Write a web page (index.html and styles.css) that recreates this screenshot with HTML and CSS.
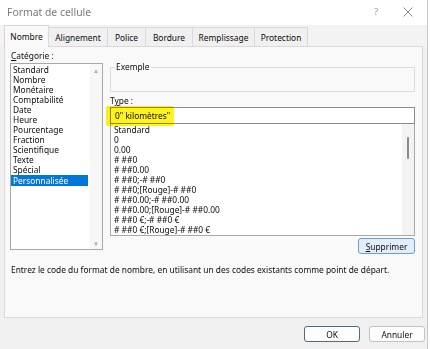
FILE: index.html
```html
<!DOCTYPE html>
<html lang="fr">
<head>
<meta charset="utf-8">
<title>Format de cellule</title>
<link rel="stylesheet" href="styles.css">
</head>
<body>
<div class="dialog">
  <div class="titlebar">
    <span class="title">Format de cellule</span>
    <span class="help">?</span>
    <svg class="close" width="10" height="10" viewBox="0 0 10 10"><path d="M0.5 0.5L9.5 9.5M9.5 0.5L0.5 9.5" stroke="#8a8a8a" stroke-width="1" fill="none"/></svg>
  </div>
  <div class="tabs">
    <span class="tab active">Nombre</span>
    <span class="tab t-align">Alignement</span>
    <span class="tab t-police">Police</span>
    <span class="tab t-bord">Bordure</span>
    <span class="tab t-remp">Remplissage</span>
    <span class="tab t-prot">Protection</span>
  </div>
  <div class="panel">
    <div class="cols">
      <div class="leftcol">
        <div class="label"><u>C</u>atégorie :</div>
        <div class="catlist">
          <div class="items">
            <div class="item">Standard</div>
            <div class="item">Nombre</div>
            <div class="item">Monétaire</div>
            <div class="item">Comptabilité</div>
            <div class="item">Date</div>
            <div class="item">Heure</div>
            <div class="item">Pourcentage</div>
            <div class="item">Fraction</div>
            <div class="item">Scientifique</div>
            <div class="item">Texte</div>
            <div class="item">Spécial</div>
            <div class="item sel">Personnalisée</div>
          </div>
          <div class="vscroll">
            <span class="arrow">▲</span>
            <span class="arrow">▼</span>
          </div>
        </div>
      </div>
      <div class="rightcol">
        <fieldset class="sample"><legend>Exemple</legend></fieldset>
        <div class="label type-label">T<u>y</u>pe :</div>
        <div class="typebox">
          <span class="typetext">0" kilomètres"</span>
          <span class="marker"></span>
        </div>
        <div class="fmtlist">
          <div class="items">
            <div class="item">Standard</div>
            <div class="item">0</div>
            <div class="item">0.00</div>
            <div class="item"># ##0</div>
            <div class="item"># ##0.00</div>
            <div class="item"># ##0;-# ##0</div>
            <div class="item"># ##0;[Rouge]-# ##0</div>
            <div class="item"># ##0.00;-# ##0.00</div>
            <div class="item"># ##0.00;[Rouge]-# ##0.00</div>
            <div class="item"># ##0 €;-# ##0 €</div>
            <div class="item"># ##0 €;[Rouge]-# ##0 €</div>
          </div>
          <div class="vscroll2"><span class="thumb"></span></div>
        </div>
        <div class="btnrow">
          <button class="btn del"><u>S</u>upprimer</button>
        </div>
      </div>
    </div>
    <p class="desc">Entrez le code du format de nombre, en utilisant un des codes existants comme point de départ.</p>
  </div>
  <div class="footer">
    <button class="btn ok">OK</button>
    <button class="btn cancel">Annuler</button>
  </div>
</div>
</body>
</html>
```
FILE: styles.css
```css
* { box-sizing: border-box; }
html, body { margin: 0; padding: 0; }
body {
  width: 430px;
  height: 349px;
  background: #ffffff;
  font-family: "Noto Sans", "Open Sans", sans-serif;
  font-size: 8.4px;
  color: #0d0d0d;
  overflow: hidden;
}
.dialog {
  width: 428px;
  height: 349px;
  background: #f0f0f0;
  border-right: 1px solid #c9c9c9;
  display: flex;
  flex-direction: column;
}
.titlebar {
  height: 25px;
  background: #ffffff;
  display: flex;
  align-items: center;
  padding: 0 0 2px 7px;
}
.title {
  font-size: 10.4px;
  color: #7b7b7b;
  flex: 1;
}
.help {
  color: #9a9a9a;
  font-size: 9.5px;
  margin-right: 25px;
}
.close { margin-right: 14px; }
.tabs {
  height: 21px;
  display: flex;
  align-items: flex-end;
  padding-left: 4px;
  background: #f3f3f3;
  position: relative;
  z-index: 1;
}
.tab {
  height: 19px;
  display: flex;
  align-items: center;
  justify-content: center;
  border: 1px solid #dadada;
  border-bottom: none;
  margin-left: -1px;
  background: #f0f0f0;
}
.tab.active {
  width: 45px;
  margin-left: 0;
  background: #f9f9f9;
  border-color: #d4d4d4;
  margin-bottom: -1px;
  height: 22px;
}
.t-align { width: 60px; }
.t-police { width: 39px; }
.t-bord { width: 48px; }
.t-remp { width: 63px; }
.t-prot { width: 54px; }
.panel {
  margin: 0 4px;
  height: 272px;
  background: #f9f9f9;
  border: 1px solid #d9d9d9;
  padding: 3px 7px 0 5px;
}
.cols {
  display: flex;
  gap: 7px;
}
.leftcol { width: 93px; }
.label { height: 12px; line-height: 12px; padding-left: 1px; }
.catlist {
  margin-top: 1px;
  height: 187px;
  background: #ffffff;
  border: 1px solid #a9a9a9;
  display: flex;
}
.items { flex: 1; padding-top: 1px; }
.item {
  height: 10px;
  line-height: 10px;
  padding-left: 2px;
  white-space: nowrap;
}
.item.sel {
  background: #0078d7;
  color: #ffffff;
  height: 11px;
  line-height: 11px;
  margin-right: 2px;
}
.vscroll {
  width: 12px;
  background: #f7f7f7;
  display: flex;
  flex-direction: column;
  justify-content: space-between;
  align-items: center;
  padding: 3px 0 1px;
}
.arrow { font-size: 6px; color: #a8a8a8; line-height: 8px; }
.rightcol { flex: 1; display: flex; flex-direction: column; }
.sample {
  margin: 12px 0 0;
  height: 30px;
  border: 1px solid #dcdcdc;
  padding: 0 4px;
}
.sample legend { padding: 0 1px; line-height: 10px; }
.type-label { margin-top: 3px; padding-left: 0; }
.typebox {
  position: relative;
  height: 17px;
  background: #ffffff;
  border: 1px solid #8c8c8c;
  display: flex;
  align-items: center;
  padding-left: 4px;
}
.typetext { position: relative; }
.marker {
  position: absolute;
  left: -5px;
  top: -2px;
  width: 68px;
  height: 20px;
  background: #fff21f;
  mix-blend-mode: multiply;
  border-radius: 2px;
}
.fmtlist {
  height: 112px;
  background: #ffffff;
  border: 1px solid #a9a9a9;
  border-top: none;
  display: flex;
}
.fmtlist .items { padding-top: 1px; }
.fmtlist .item { padding-left: 3px; }
.vscroll2 {
  width: 12px;
  background: #f3f3f3;
}
.thumb {
  display: block;
  width: 2px;
  height: 22px;
  background: #8a8a8a;
  margin: 13px 0 0 5px;
  border-radius: 1px;
}
.btnrow { display: flex; justify-content: flex-end; margin-top: 2px; }
.btn {
  font-family: inherit;
  font-size: 8.4px;
  color: #0d0d0d;
  padding: 0;
  height: 16px;
  border-radius: 3px;
  background: #fdfdfd;
  border: 1px solid #c3c3c3;
}
.del {
  width: 57px;
  background: #e1eef9;
  border-color: #6f9fc8;
}
.desc {
  margin: 10px 0 0 1px;
  line-height: 12px;
  white-space: nowrap;
}
.footer {
  display: flex;
  justify-content: flex-end;
  gap: 9px;
  padding: 8px 2px 0 0;
}
.ok {
  width: 56px;
  border: 1px solid #4e6a86;
  box-shadow: inset 0 0 0 1px #ffffff;
}
.cancel { width: 56px; }
```
